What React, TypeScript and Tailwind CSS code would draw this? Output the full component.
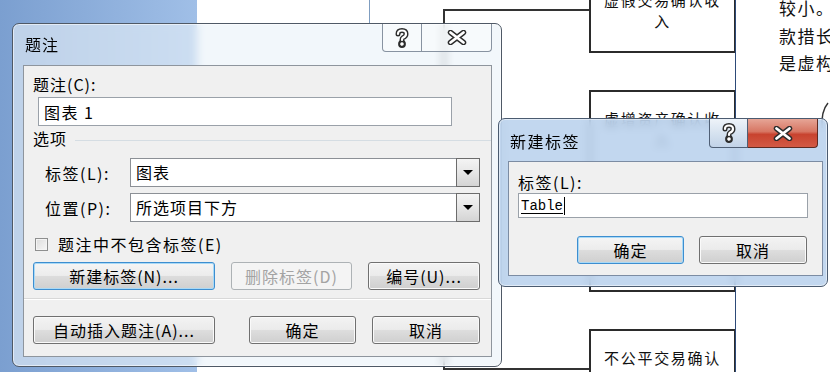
import React from "react";

type BtnProps = {
  label: string;
  className?: string;
  focus?: boolean;
  disabled?: boolean;
};

function WinButton({ label, className = "", focus = false, disabled = false }: BtnProps) {
  const look = disabled
    ? "border-[#adb2b5] bg-[#f4f4f4] text-[#a3a3a3]"
    : focus
      ? "border-[#3d8ed0] bg-[linear-gradient(to_bottom,#f5f5f5_0%,#ececec_48%,#dcdcdc_52%,#cfcfcf_100%)] text-black shadow-[inset_0_0_0_1px_#a9d9f6]"
      : "border-[#707070] bg-[linear-gradient(to_bottom,#f3f3f3_0%,#ebebeb_48%,#dddddd_52%,#cfcfcf_100%)] text-black shadow-[inset_0_0_0_1px_#fafafa]";
  return (
    <button
      className={`flex h-[28px] shrink-0 items-center justify-center rounded-[3px] border text-[16px] leading-none tracking-[1px] ${look} ${className}`}
    >
      {label}
    </button>
  );
}

// outlined white "?" like the Win7 caption button
function HelpGlyph() {
  return (
    <svg width="16" height="20" viewBox="0 0 16 20">
      <g fill="none" strokeLinecap="round" strokeLinejoin="round">
        <path d="M4 6 Q4 2.5 8 2.5 Q12 2.5 12 6 Q12 8.5 8.8 9.8 Q8 10.3 8 12" stroke="#2c2c2c" strokeWidth="5" />
        <circle cx="8" cy="16" r="1.4" stroke="#2c2c2c" strokeWidth="5" />
        <path d="M4 6 Q4 2.5 8 2.5 Q12 2.5 12 6 Q12 8.5 8.8 9.8 Q8 10.3 8 12" stroke="#ffffff" strokeWidth="2.2" />
        <circle cx="8" cy="16" r="1.2" fill="#ffffff" stroke="#ffffff" strokeWidth="1.2" />
      </g>
    </svg>
  );
}

function CloseGlyph() {
  return (
    <svg width="20" height="15" viewBox="0 0 20 15">
      <path d="M3.5 2.5 L16.5 12.5 M16.5 2.5 L3.5 12.5" stroke="#2c2c2c" strokeWidth="5.5" strokeLinecap="round" />
      <path d="M3.5 2.5 L16.5 12.5 M16.5 2.5 L3.5 12.5" stroke="#ffffff" strokeWidth="2.8" strokeLinecap="round" />
    </svg>
  );
}

function Combo({ value }: { value: string }) {
  return (
    <div className="flex h-[29px] w-[350px] border border-[#8c9096] bg-white">
      <span className="flex-1 pl-[5px] text-[16px] leading-[27px] tracking-[1px] text-black">{value}</span>
      <div className="-my-px -mr-px flex w-[24px] items-center justify-center border border-[#6c6c6c] bg-[linear-gradient(to_bottom,#f4f4f4_0%,#e6e6e6_50%,#d4d4d4_100%)]">
        <div className="h-0 w-0 border-x-[5px] border-t-[5px] border-x-transparent border-t-black" />
      </div>
    </div>
  );
}

function CaptionDialog() {
  return (
    <div className="absolute left-[12px] top-[23px] flex h-[344px] w-[490px] flex-col rounded-[7px] border border-[#4f5966] bg-[rgba(234,241,249,0.6)] shadow-[inset_0_0_0_1px_rgba(255,255,255,0.55)] backdrop-blur-[4px]">
      <div className="flex h-[41px] items-start">
        <span className="ml-[12px] mt-[10px] text-[16px] leading-[20px] tracking-[1px] text-black">题注</span>
        <div className="ml-auto mr-[9px] flex h-[28px]">
          <div className="flex w-[40px] items-center justify-center rounded-bl-[4px] border border-t-0 border-[#8893a1] bg-white/40">
            <HelpGlyph />
          </div>
          <div className="flex w-[70px] items-center justify-center rounded-br-[4px] border border-l-0 border-t-0 border-[#8893a1] bg-white/40">
            <CloseGlyph />
          </div>
        </div>
      </div>

      <div className="ml-[10px] flex h-[292px] w-[469px] flex-col border border-[#8e959d] bg-[#f0f0f0] text-black">
        <span className="ml-[9px] mt-[8px] text-[16px] leading-[20px] tracking-[1px]">题注(C):</span>
        <div className="ml-[14px] mt-[3px] flex h-[29px] w-[414px] items-center border border-[#9aa1a9] bg-white pl-[5px] text-[16px] tracking-[1.5px]">
          图表 1
        </div>

        <div className="ml-[9px] mt-[2px] flex h-[20px] items-center">
          <span className="text-[16px] leading-[20px] tracking-[1px]">选项</span>
          <div className="ml-[8px] mt-[4px] h-px flex-1 bg-[#d5dde3]" />
        </div>

        <div className="mt-[10px] flex items-center">
          <span className="ml-[21px] w-[85px] text-[16px] leading-[20px] tracking-[1.5px]">标签(L):</span>
          <Combo value="图表" />
        </div>
        <div className="mt-[6px] flex items-center">
          <span className="ml-[21px] w-[85px] text-[16px] leading-[20px] tracking-[1.5px]">位置(P):</span>
          <Combo value="所选项目下方" />
        </div>

        <div className="ml-[11px] mt-[12px] flex h-[20px] items-center">
          <div className="h-[13px] w-[13px] border border-[#8e8f8f] bg-[linear-gradient(to_bottom_right,#dcdcdc,#f7f7f7)] shadow-[inset_0_0_0_1px_#f4f4f4]" />
          <span className="ml-[10px] text-[16px] leading-[20px] tracking-[1.5px]">题注中不包含标签(E)</span>
        </div>

        <div className="ml-[9px] mt-[8px] flex">
          <WinButton label="新建标签(N)..." focus className="w-[182px]" />
          <WinButton label="删除标签(D)" disabled className="ml-[16px] w-[121px]" />
          <WinButton label="编号(U)..." className="ml-[16px] w-[112px]" />
        </div>

        <div className="mt-[8px] h-[2px] border-t border-[#d8d8d8] bg-white" />

        <div className="ml-[9px] mt-[16px] flex">
          <WinButton label="自动插入题注(A)..." className="w-[182px]" />
          <WinButton label="确定" className="ml-[34px] w-[107px]" />
          <WinButton label="取消" className="ml-[16px] w-[108px]" />
        </div>
      </div>
    </div>
  );
}

function NewLabelDialog() {
  return (
    <div className="absolute left-[498px] top-[118px] flex h-[169px] w-[330px] flex-col rounded-[7px] border border-[#4b5b70] bg-[rgba(180,206,236,0.82)] shadow-[inset_0_0_0_1px_rgba(255,255,255,0.5)] backdrop-blur-[5px]">
      <div className="flex h-[42px] items-start">
        <span className="ml-[11px] mt-[12px] text-[16px] leading-[20px] tracking-[1.5px] text-black">新建标签</span>
        <div className="ml-auto mr-[9px] flex h-[29px]">
          <div className="flex w-[39px] items-center justify-center rounded-bl-[4px] border border-t-0 border-[#4f5f75] bg-[linear-gradient(to_bottom,#eef3f9_0%,#d7e3f0_50%,#c2d3e8_100%)]">
            <HelpGlyph />
          </div>
          <div className="flex w-[70px] items-center justify-center rounded-br-[4px] border border-l-0 border-t-0 border-[#5e2a22] bg-[linear-gradient(to_bottom,#e6a596_0%,#d77663_45%,#c8432f_55%,#d35a45_100%)]">
            <CloseGlyph />
          </div>
        </div>
      </div>

      <div className="ml-[9px] flex h-[115px] w-[315px] flex-col border border-[#7c8ca3] bg-[#f0f0f0] text-black">
        <span className="ml-[9px] mt-[10px] text-[16px] leading-[20px] tracking-[1.5px]">标签(L):</span>
        <div className="ml-[9px] mt-[1px] flex h-[25px] w-[290px] items-center border border-[#9aa1a9] bg-white pl-[2px]">
          <span className="text-[14px] leading-none text-black underline underline-offset-[3px] [font-family:'Liberation_Mono',monospace]">
            Table
          </span>
          <span className="ml-px h-[18px] w-px bg-black" />
        </div>
        <div className="ml-[68px] mt-[18px] flex">
          <WinButton label="确定" focus className="w-[107px]" />
          <WinButton label="取消" className="ml-[15px] w-[108px]" />
        </div>
      </div>
    </div>
  );
}

export default function App() {
  return (
    <div className="relative h-[372px] w-[830px] overflow-hidden [font-family:'Noto_Sans_CJK_SC',sans-serif]">
      <div className="flex h-full">
        <div className="w-[197px] bg-[linear-gradient(to_right,#7b9fd0,#a0bfe7)]" />
        <div className="flex-1 bg-white" />
      </div>

      {/* flowchart on the document page */}
      <div className="absolute left-[369px] top-0 h-[23px] w-px bg-[#7f9dc0]" />
      <div className="absolute left-[443px] top-[9px] h-[361px] w-[2px] bg-[#333]" />
      <div className="absolute left-[443px] top-[9px] h-[2px] w-[147px] bg-[#333]" />
      <div className="absolute left-[445px] top-[368px] h-[2px] w-[145px] bg-[#333]" />

      <div className="absolute left-[589px] top-[-30px] flex h-[83px] w-[147px] flex-col items-center border-2 border-[#2b2b2b] pt-[17px] text-[15px] leading-[21px] tracking-[1.7px] text-[#111]">
        <span>虚假交易确认收</span>
        <span>入</span>
      </div>
      <div className="absolute left-[589px] top-[90px] flex h-[202px] w-[147px] flex-col items-center border-2 border-[#2b2b2b] pt-[16px] text-[15px] leading-[21px] tracking-[1.7px] text-[#111]">
        <span>虚增资产确认收</span>
        <span>入</span>
      </div>
      <div className="absolute left-[589px] top-[329px] flex h-[80px] w-[147px] flex-col items-center border-2 border-[#2b2b2b] pt-[16px] text-[15px] leading-[21px] tracking-[1.7px] text-[#111]">
        <span>不公平交易确认</span>
        <span>收入</span>
      </div>
      <div className="absolute left-[735px] top-0 h-full w-px bg-[#2d4a78]" />

      <div className="absolute left-[779px] top-[-6px] flex flex-col whitespace-nowrap text-[17px] leading-[27.5px] tracking-[1.5px] text-[#111]">
        <span>较小。</span>
        <span>款措长</span>
        <span>是虚构</span>
      </div>
      <svg className="absolute left-[818px] top-[102px]" width="12" height="28" viewBox="0 0 12 28">
        <path d="M10 1 Q3 9 4 26" stroke="#333" strokeWidth="1.5" fill="none" />
      </svg>

      <CaptionDialog />
      <NewLabelDialog />
    </div>
  );
}
